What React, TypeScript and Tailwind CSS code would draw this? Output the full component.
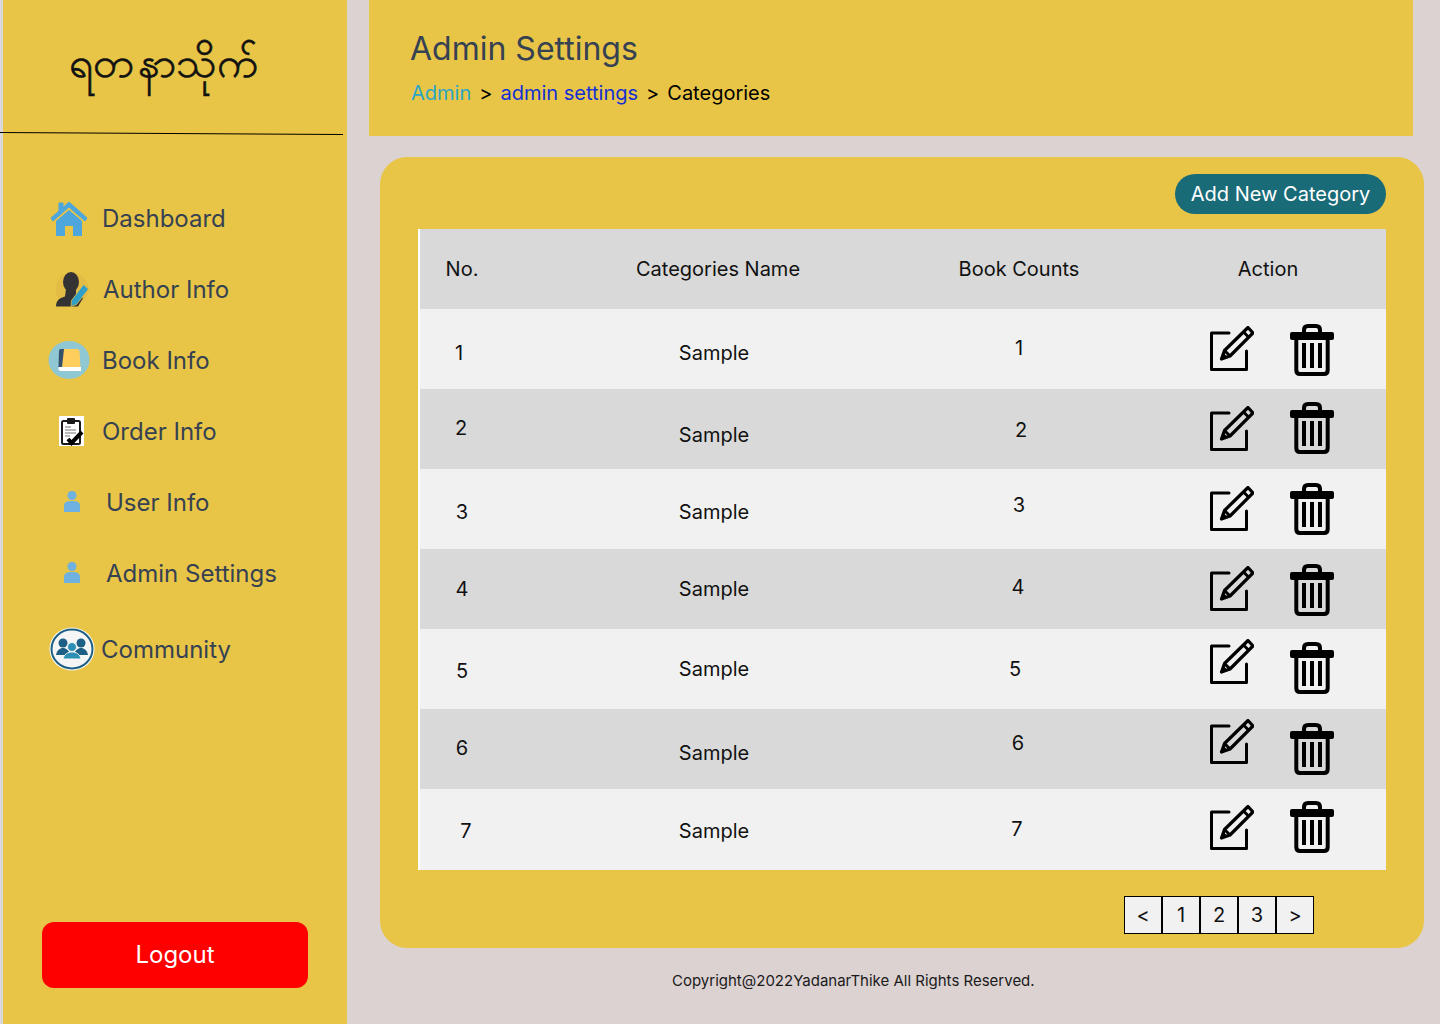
import React from 'react';

// icons for the sidebar
function HomeIcon() {
  return (
    <svg width="38" height="38" viewBox="0 0 38 38">
      <path d="M19 3 L37 19 L35 22 L19 8 L3 22 L1 19 L9 12 V4 H13 V8.5 Z" fill="#4da6dc" stroke="#4da6dc" strokeWidth="1" strokeLinejoin="round" />
      <path d="M19 11 L32 22 V37 H23 V27 H15 V37 H6 V22 Z" fill="#4da6dc" />
    </svg>
  );
}

function AuthorIcon() {
  return (
    <svg width="34" height="36" viewBox="0 0 34 36">
      <circle cx="17" cy="18" r="16.5" fill="#e3bc46" />
      <ellipse cx="16" cy="11" rx="8" ry="10" fill="#333333" />
      <path d="M11 18 H21 V24 L28 27 L23 35.5 H1 C1 30 4 27 10 25.5 Z" fill="#333333" />
      <path d="M28.5 13.5 L33.5 18 L21.5 33.5 L16 35.5 L16.5 29.5 Z" fill="#2f9fc7" stroke="#e3bc46" strokeWidth="0.8" />
    </svg>
  );
}

function BookIcon() {
  return (
    <svg width="42" height="38" viewBox="0 0 42 38">
      <ellipse cx="21" cy="19" rx="20.5" ry="19" fill="#8fc7d3" />
      <path d="M14 8 H29 Q31 8 31.5 10 L32.5 27 H12 Z" fill="#ffce5c" />
      <path d="M13 8 H16 L14 26 H10.5 L11 10 Q11 8 13 8 Z" fill="#35506b" />
      <path d="M11 26 H33 V30 H13 Q10 30 10.5 27 Z" fill="#ffffff" />
    </svg>
  );
}

function OrderIcon() {
  return (
    <svg width="25" height="30" viewBox="0 0 25 30">
      <rect width="25" height="30" fill="#ffffff" />
      <rect x="3" y="5" width="18" height="23" rx="1.5" fill="#ffffff" stroke="#1a1a1a" strokeWidth="2" />
      <rect x="8" y="2" width="8" height="6" rx="1" fill="#1a1a1a" />
      <path d="M6 11 H12 M6 14 H17 M6 17 H17 M6 20 H11" stroke="#777777" strokeWidth="1.2" />
      <path d="M9 23 L12.5 27 L23 16" stroke="#000000" strokeWidth="4" fill="none" />
    </svg>
  );
}

function UserIcon() {
  return (
    <svg width="16" height="21" viewBox="0 0 16 21">
      <circle cx="8" cy="4.5" r="4.5" fill="#6fb1e0" />
      <path d="M0 21 V15 C0 11 3 10 8 10 C13 10 16 11 16 15 V21 Z" fill="#6fb1e0" />
    </svg>
  );
}

function CommunityIcon() {
  return (
    <svg width="46" height="44" viewBox="0 0 46 44">
      <ellipse cx="23" cy="22" rx="22.5" ry="21.5" fill="#ffffff" />
      <ellipse cx="23" cy="22" rx="20.5" ry="19.5" fill="#f5f5f5" stroke="#1d5f85" strokeWidth="2" />
      <circle cx="14" cy="16" r="4.5" fill="#1d5f85" />
      <circle cx="32" cy="16" r="4.5" fill="#1d5f85" />
      <path d="M7 28 C8 23 11 21 14 21 C17 21 20 23 21 28 Z" fill="#1d5f85" />
      <path d="M25 28 C26 23 29 21 32 21 C35 21 38 23 39 28 Z" fill="#1d5f85" />
      <circle cx="23" cy="20" r="4.5" fill="#2d8fb3" stroke="#f5f5f5" strokeWidth="1" />
      <path d="M14 32 C15 27 19 25 23 25 C27 25 31 27 32 32 Z" fill="#2d8fb3" stroke="#f5f5f5" strokeWidth="1" />
    </svg>
  );
}

function EditIcon() {
  return (
    <svg width="44" height="45" viewBox="0 0 44 45" fill="none">
      <path d="M19 7 H1.5 V43.5 H36.5 V25" stroke="#000000" strokeWidth="3" strokeLinejoin="round" strokeLinecap="round" />
      <path d="M38 1.5 L43 7 L20 30 L11.5 33 L14.5 24.5 Z" stroke="#000000" strokeWidth="3.2" strokeLinejoin="round" />
      <path d="M33.5 6 L39 11.5 M14.5 24.5 L20 30" stroke="#000000" strokeWidth="3" />
      <path d="M11.5 33 L13.5 27 L17.5 31 Z" fill="#000000" />
    </svg>
  );
}

function TrashIcon() {
  return (
    <svg width="44" height="52" viewBox="0 0 44 52" fill="none">
      <path d="M14 9 V6 C14 3 16 2 18 2 H26 C28 2 30 3 30 6 V9" stroke="#000000" strokeWidth="4" />
      <rect x="0" y="8" width="44" height="8" rx="2" fill="#000000" />
      <path d="M6.3 14 V46 C6.3 49 8 50 10 50 H34 C36 50 37.7 49 37.7 46 V14" stroke="#000000" strokeWidth="4" />
      <path d="M14 19 V44 M22 19 V44 M30 19 V44" stroke="#000000" strokeWidth="4" />
    </svg>
  );
}

const navItems = [
  { label: 'Dashboard', icon: <HomeIcon />, box: 'w-[100px] pl-[47px]', h: 'h-[71px]' },
  { label: 'Author Info', icon: <AuthorIcon />, box: 'w-[101px] pl-[52px]', h: 'h-[71px]' },
  { label: 'Book Info', icon: <BookIcon />, box: 'w-[100px] pl-[45px]', h: 'h-[71px]' },
  { label: 'Order Info', icon: <OrderIcon />, box: 'w-[100px] pl-[56px]', h: 'h-[71px]' },
  { label: 'User Info', icon: <UserIcon />, box: 'w-[104px] pl-[61px]', h: 'h-[71px]' },
  { label: 'Admin Settings', icon: <UserIcon />, box: 'w-[104px] pl-[61px]', h: 'h-[71px]' },
  { label: 'Community', icon: <CommunityIcon />, box: 'w-[99px] pl-[46px]', h: 'h-[81px]' },
];

// the cells in the picture are not lined up, so each row keeps its own nudges
const rows = [
  { no: 1, noX: -3, noY: 4, nameY: 4, count: 1, countY: -1, countX: 0, editY: 0, trashY: 1 },
  { no: 2, noX: -1, noY: -1, nameY: 6, count: 2, countY: 1, countX: 2, editY: 0, trashY: -1 },
  { no: 3, noX: 0, noY: 3, nameY: 3, count: 3, countY: -4, countX: 0, editY: 0, trashY: 0 },
  { no: 4, noX: 0, noY: 0, nameY: 0, count: 4, countY: -2, countX: -1, editY: 0, trashY: 1 },
  { no: 5, noX: 0, noY: 2, nameY: 0, count: 5, countY: 0, countX: -4, editY: -7, trashY: -1 },
  { no: 6, noX: 0, noY: -1, nameY: 4, count: 6, countY: -6, countX: -1, editY: -7, trashY: 0 },
  { no: 7, noX: 4, noY: 1, nameY: 1, count: 7, countY: -1, countX: -2, editY: -2, trashY: -3 },
];

const shift = (x: number, y: number) => ({ marginLeft: x * 2, marginTop: y * 2 });

export default function App() {
  return (
    <div className="flex h-[1024px] w-[1440px] overflow-hidden bg-[#dcd2d2] font-['Inter',sans-serif] text-[#000000]">
      {/* Sidebar */}
      <div className="h-full w-[3px] bg-[#d9d9d9]" />
      <aside className="flex h-full w-[344px] flex-col bg-[#e8c547]">
        <div className="flex h-[133px] items-center gap-[5px] pb-[12px] pl-[66px] font-['Noto_Sans','DejaVu_Sans',sans-serif] text-[42px] leading-none text-[#111111] [-webkit-text-stroke:0.6px_#111111]">
          <span>ရတ</span>
          <span>နာသိုက်</span>
        </div>
        <div className="ml-[-3px] h-px w-[343px] rotate-[0.33deg] bg-black" />
        <nav className="mt-[48px] flex flex-col">
          {navItems.map((item) => (
            <div key={item.label} className={`flex items-center ${item.h}`}>
              <div className={`flex shrink-0 items-center ${item.box}`}>{item.icon}</div>
              <span className="ml-[-1px] mt-[2px] text-[24px] leading-none text-[#364152]">{item.label}</span>
            </div>
          ))}
        </nav>
        <div className="mt-auto mb-[36px] ml-[39px] flex h-[66px] w-[266px] items-center justify-center rounded-xl bg-[#ff0000] text-[24px] text-white">
          Logout
        </div>
      </aside>

      {/* Main */}
      <main className="ml-[22px] flex flex-col">
        <header className="h-[136px] w-[1044px] bg-[#e8c547] pl-[42px] pt-[29px]">
          <h1 className="ml-[-1px] text-[32px] leading-[40px] text-[#364152]">Admin Settings</h1>
          <div className="mt-[4px] flex gap-[8px] text-[20px] leading-[40px] text-[#000000]">
            <span className="text-[#2ba5c7]">Admin</span>
            <span>&gt;</span>
            <span className="text-[#1330d6]">admin settings</span>
            <span>&gt;</span>
            <span>Categories</span>
          </div>
        </header>

        <section className="ml-[11px] mt-[21px] flex h-[791px] w-[1044px] flex-col rounded-[27px] bg-[#e8c547] pl-[38px] pt-[17px]">
          <div className="mr-[38px] flex justify-end">
            <button className="flex h-[40px] w-[211px] items-center justify-center rounded-[20px] bg-[#1a6b78] text-[20px] text-white">
              Add New Category
            </button>
          </div>

          <div className="mt-[15px] w-[968px] border-l-2 border-white">
            <div className="grid h-[80px] grid-cols-[84px_428px_174px_280px] items-center bg-[#d9d9d9] text-[20px] text-[#111111]">
              <span className="text-center">No.</span>
              <span className="text-center">Categories Name</span>
              <span className="text-center">Book Counts</span>
              <span className="pl-[44px] text-center">Action</span>
            </div>
            {rows.map((row, i) => (
              <div
                key={row.no}
                className={`grid grid-cols-[84px_428px_174px_280px] items-center text-[20px] text-[#111111] ${
                  i % 2 === 0 ? 'bg-[#f1f1f1]' : 'bg-[#d9d9d9]'
                } ${i === rows.length - 1 ? 'h-[81px]' : 'h-[80px]'}`}
              >
                <span className="text-center" style={shift(row.noX, row.noY)}>{row.no}</span>
                <span className="text-center" style={shift(-4, row.nameY)}>Sample</span>
                <span className="text-center" style={shift(row.countX, row.countY)}>{row.count}</span>
                <div className="flex items-center pl-[104px]">
                  <div className="w-[80px]" style={{ marginTop: row.editY * 2 - 1 }}><EditIcon /></div>
                  <div style={{ marginTop: row.trashY * 2 }}><TrashIcon /></div>
                </div>
              </div>
            ))}
          </div>

          <div className="ml-[706px] mt-[26px] flex w-[190px] text-[20px] text-[#111111]">
            {['<', '1', '2', '3', '>'].map((p) => (
              <div key={p} className="flex h-[38px] w-[38px] items-center justify-center border border-black bg-[#f1f1f1]">
                {p}
              </div>
            ))}
          </div>
        </section>

        <footer className="ml-[303px] mt-[23px] text-[15px] leading-[20px] text-[#1a1a1a]">
          Copyright@2022YadanarThike All Rights Reserved.
        </footer>
      </main>
    </div>
  );
}
